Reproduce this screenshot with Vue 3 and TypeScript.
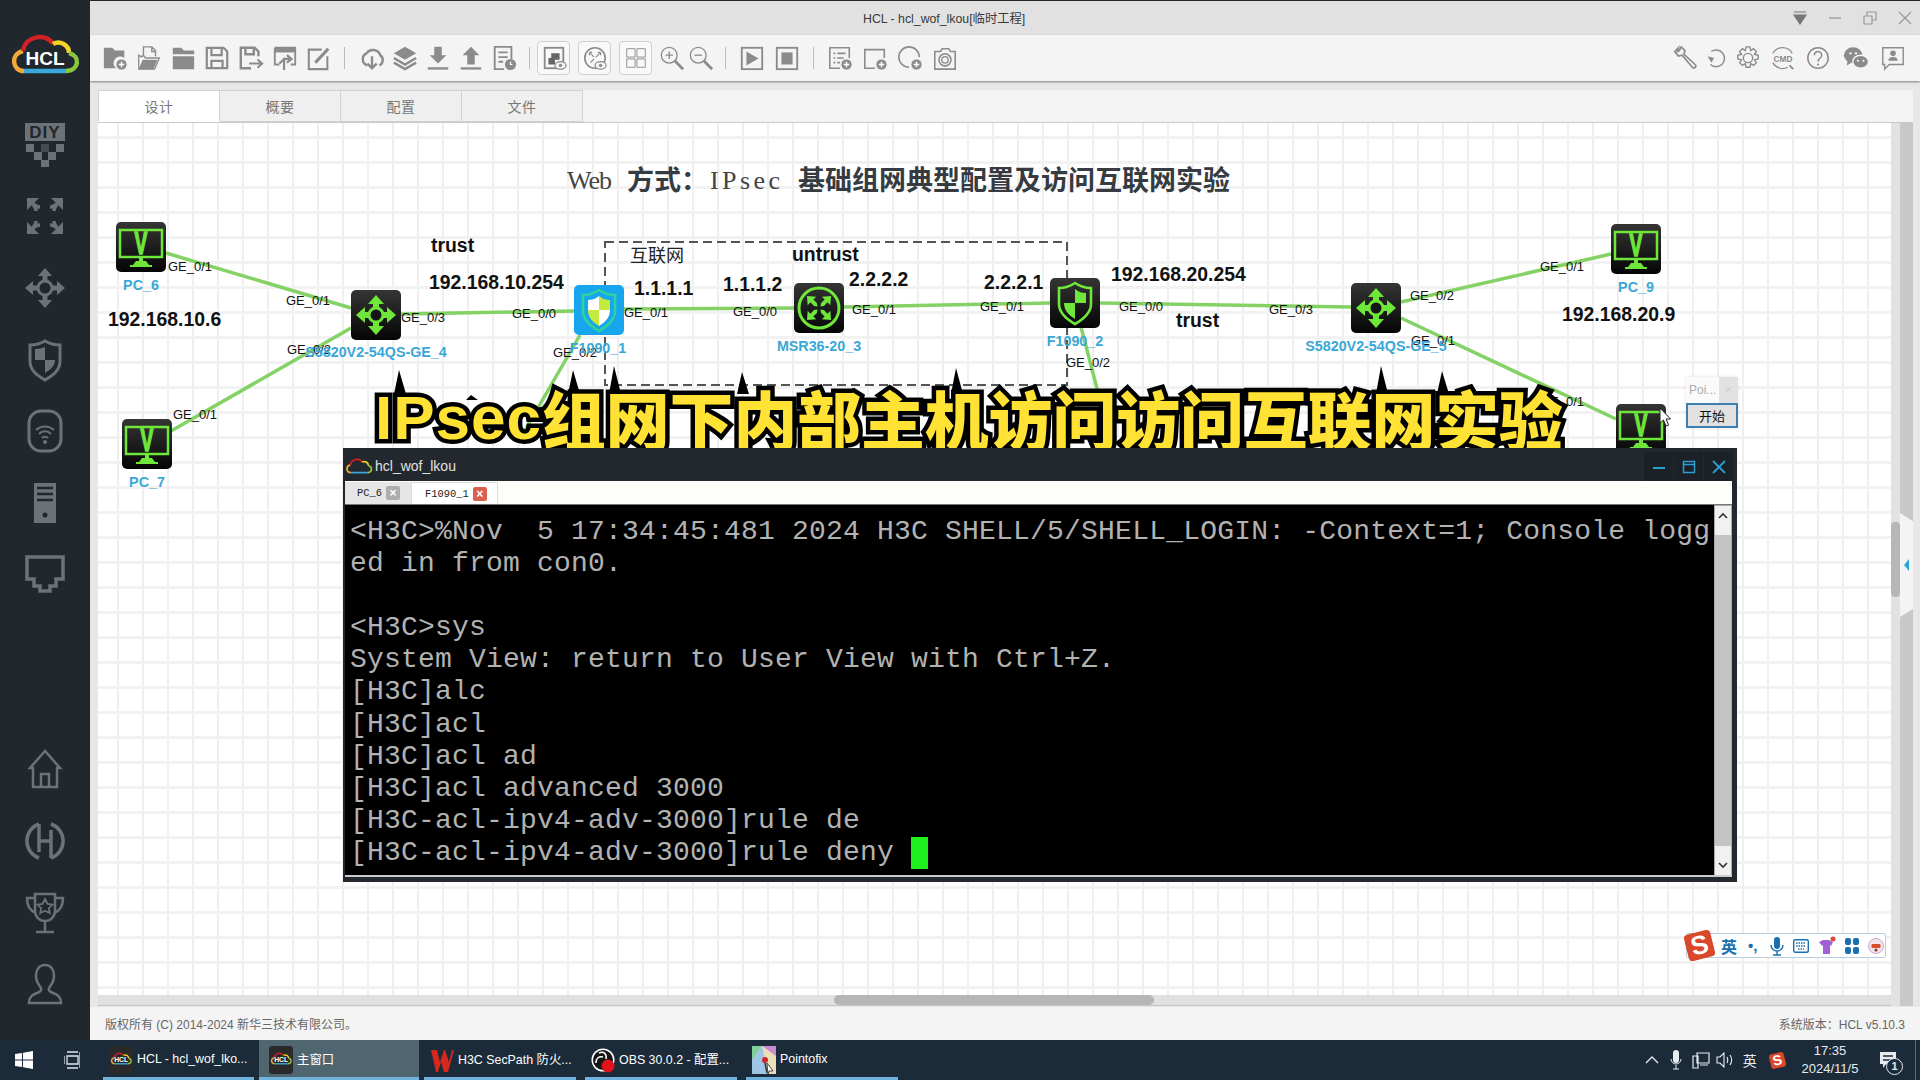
<script setup lang="ts">
const OX = 98
const OY = 123
const G = '#8b8b8b'
const F = `fill="${G}"`
const S = `fill="none" stroke="${G}"`
const plus = (x: number, y: number, r = 6) =>
  `<circle cx="${x}" cy="${y}" r="${r}" ${F} stroke="#f4f4f4" stroke-width="1"/><path d="M${x} ${y - 3}v6M${x - 3} ${y}h6" stroke="#fff" stroke-width="1.6"/>`
const eye = (x: number, y: number) =>
  `<ellipse cx="${x}" cy="${y}" rx="6" ry="4" fill="#f4f4f4" stroke="${G}" stroke-width="1.3"/><circle cx="${x}" cy="${y}" r="1.8" ${F}/>`

const toolIcons: Record<string, string> = {
  newfolder: `<path d="M2 3h9l3 3h10v8a7 7 0 0 0-9 11H2z" ${F}/>${plus(21, 21)}`,
  openfile: `<path d="M8 12V2h9l4 4v6M17 2v5h4" ${S} stroke-width="1.5"/><path d="M3 26V11l3 2v-1h3l1 2h15l-5 12z" fill="#fff" stroke="${G}" stroke-width="1.5"/><path d="M3 26 7 16h16l-4 10z" ${F}/>`,
  folder: `<path d="M3 3h9l3 3h11v4H3zM3 12h23v14H3z" ${F}/>`,
  save: `<path d="M3 3h18l4 4v18H3zM8 3v8h11V3M8 25v-8h12v8" ${S} stroke-width="2.4"/>`,
  saveas: `<path d="M14 25H3V3h15l4 4v5M8 3v7h9V3" ${S} stroke-width="2.6"/><path d="M12 20h13M21 15.5l5 4.5-5 4.5" ${S} stroke-width="2.2"/>`,
  import: `<path d="M3 3h22v18h-5M8 21H3V3" ${S} stroke-width="2"/><rect x="3" y="3" width="22" height="5" ${F}/><path d="M13 27V15h6M16 11l5 4-5 4M8 20l5-5" ${S} stroke-width="2.4"/>`,
  edit: `<path d="M17 5H3v21h20V12" ${S} stroke-width="2.2"/><path d="M10 19 24 4" ${S} stroke-width="3.4"/>`,
  cloud: `<path d="M9 22a7 7 0 0 1-1-13 8.5 8.5 0 0 1 15 2 6.5 6.5 0 0 1-1 11" ${S} stroke-width="2.6"/><path d="M14 12v13M9 20l5 5 5-5" ${S} stroke-width="2.6"/>`,
  layers: `<path d="M14 2 26 9 14 16 2 9z" ${F}/><path d="M2 14l12 7 12-7M2 19l12 7 12-7" ${S} stroke-width="2.6"/>`,
  download: `<path d="M10 2h8v9h5l-9 9-9-9h5z" ${F}/><rect x="3" y="24" width="22" height="2.5" ${F}/>`,
  upload: `<path d="M14 2l9 9h-5v10h-8V11H5z" ${F}/><rect x="3" y="24" width="22" height="2.5" ${F}/>`,
  report: `<path d="M14 26H4V2h18v13M8 8h10M8 13h10M8 18h5" ${S} stroke-width="2"/><circle cx="21" cy="21" r="6" ${F}/><path d="M21 18v3h2" stroke="#fff" stroke-width="1.3" fill="none"/>`,
  net: `<rect x="4" y="3" width="20" height="22" fill="none" stroke="${G}" stroke-width="2"/><path d="M11 9h9v7h-5v5H8v-7h3z" fill="#666"/>${eye(21, 22)}`,
  ring: `<circle cx="14" cy="14" r="11" fill="none" stroke="${G}" stroke-width="1.8"/><path d="M9 9l4 4M19 9l-4 4M9 19l4-4M8 8h3M8 8v3M20 8h-3M20 8v3" ${S} stroke-width="1.3"/>${eye(20, 22)}`,
  grid: `<path d="M4 4h9v9H4zM15 4h9v9h-9zM4 15h9v9H4zM15 15h9v9h-9z" ${S} stroke-width="1"/>`,
  zoomin: `<circle cx="11" cy="11" r="8.5" ${S} stroke-width="1.4"/><path d="M11 7v8M7 11h8" ${S} stroke-width="1.4"/><path d="M17 17l9 9" ${S} stroke-width="3"/>`,
  zoomout: `<circle cx="11" cy="11" r="8.5" ${S} stroke-width="1.4"/><path d="M7 11h8" ${S} stroke-width="1.4"/><path d="M17 17l9 9" ${S} stroke-width="3"/>`,
  play: `<rect x="3" y="3" width="22" height="23" ${S} stroke-width="2"/><path d="M8 7l13 7.5L8 22z" ${F}/>`,
  stop: `<rect x="3" y="3" width="22" height="23" ${S} stroke-width="2"/><rect x="8" y="8" width="12" height="13" ${F}/>`,
  listadd: `<path d="M14 25H3V3h21v11M7 9h2M11 9h9M7 14h2M11 14h7M7 19h2M11 19h3" ${S} stroke-width="1.7"/>${plus(21, 21)}`,
  rectadd: `<path d="M14 25H3V5h21v9" ${S} stroke-width="1.7"/>${plus(21, 21)}`,
  circleadd: `<path d="M13 24a11 11 0 1 1 11-11" ${S} stroke-width="1.7"/>${plus(21, 21)}`,
  camera: `<path d="M3 7h6l2-3h7l2 3h5v19H3z" ${S} stroke-width="1.7"/><circle cx="14" cy="16" r="6.5" ${S} stroke-width="1.7"/><circle cx="14" cy="16" r="3.5" ${S} stroke-width="1.5"/>`,
  wrench: `<path d="M8 3 4 7l4 5 4-1 11 13a2 2 0 0 0 3-3L14 10l1-4-4-4-2 4-2 1z" ${S} stroke-width="1.8"/>`,
  refresh: `<path d="M9 7a9 9 0 1 1-1 14" ${S} stroke-width="1.6"/><path d="M5 12l4 7 3-5z" ${F}/>`,
  gear: `<circle cx="14" cy="14" r="5" ${S} stroke-width="1.5"/><path d="M12 2h4l1 4 3-2 3 3-2 3 4 1v4l-4 1 2 3-3 3-3-2-1 4h-4l-1-4-3 2-3-3 2-3-4-1v-4l4-1-2-3 3-3 3 2z" ${S} stroke-width="1.5"/>`,
  cmd: `<path d="M3 9a12 12 0 0 1 21 0M3 19a12 12 0 0 0 16 5" ${S} stroke-width="1.3"/><text x="14" y="18" text-anchor="middle" font-family="Liberation Sans" font-weight="700" font-size="9" ${F}>CMD</text><path d="M21 22l4 4" ${S} stroke-width="2"/>`,
  help: `<circle cx="14" cy="14" r="11" ${S} stroke-width="1.6"/><path d="M10 11a4 4 0 1 1 6 3.5c-1.5 1-2 1.5-2 3.5" ${S} stroke-width="1.6"/><circle cx="14" cy="21" r="1.2" ${F}/>`,
  wechat: `<ellipse cx="11" cy="11" rx="10" ry="8.5" ${F}/><path d="M5 17l-1 5 5-3z" ${F}/><ellipse cx="19" cy="18" rx="8.5" ry="7" ${F} stroke="#f4f4f4" stroke-width="1.5"/><circle cx="8" cy="9" r="1.3" fill="#f4f4f4"/><circle cx="14" cy="9" r="1.3" fill="#f4f4f4"/><circle cx="16" cy="17" r="1.1" fill="#f4f4f4"/><circle cx="22" cy="17" r="1.1" fill="#f4f4f4"/>`,
  feedback: `<path d="M3 3h22v18H10l-5 5v-5H3z" ${S} stroke-width="1.5"/><circle cx="14" cy="9" r="3" ${F}/><path d="M9 17c0-3 2-4 5-4s5 1 5 4z" ${F}/>`
}

const toolGroups = [
  { cls: 'g1', items: ['newfolder', 'openfile', 'folder', 'save', 'saveas', 'import', 'edit'] },
  { cls: 'g2', items: ['cloud', 'layers', 'download', 'upload', 'report'] },
  { cls: 'g3', boxed: ['net', 'ring', 'grid'], items: ['zoomin', 'zoomout'] },
  { cls: 'g4', items: ['play', 'stop'] },
  { cls: 'g5', items: ['listadd', 'rectadd', 'circleadd', 'camera'] }
]
const rightTools = ['wrench', 'refresh', 'gear', 'cmd', 'help', 'wechat', 'feedback']

const N = '#6d7276'
const NS = `fill="none" stroke="${N}"`
const NF = `fill="${N}"`
const arrow = `<path d="M22 2l7 8h-4.5v6h-5v-6H15z" ${NF}/>`
const rotated = (svg: string, angles: number[]) =>
  angles.map((a) => `<g transform="rotate(${a} 22 22)">${svg}</g>`).join('')

const sideTop: string[] = [
  `<rect x="2" y="0" width="40" height="18" ${NF}/><text x="22" y="15" text-anchor="middle" font-family="Liberation Sans" font-weight="700" font-size="17" letter-spacing="1" fill="#20272d">DIY</text><path d="M3 21h8v8H3zM33 21h8v8h-8zM11 29h8v8h-8zM25 29h8v8h-8zM18 37h8v7h-8z" ${NF}/><path d="M18 21h8v8h-8z" ${NF} opacity=".5"/>`,
  `${rotated(`<path d="M8 8c5 5 7 5 9 5M8 8c5 5 5 7 5 9" fill="none" stroke="${N}" stroke-width="3.5"/><path d="M4 4h12L4 16z" ${NF}/>`, [0, 90, 180, 270])}`,
  `${rotated(arrow, [0, 90, 180, 270])}<circle cx="22" cy="22" r="7" fill="#20272d" stroke="${N}" stroke-width="3"/>`,
  `<path d="M22 3c5 3 10 4 15 4v16c0 10-8 15-15 19-7-4-15-9-15-19V7c5 0 10-1 15-4z" ${NS} stroke-width="3"/><path d="M22 9v13H12V11c4 0 7-1 10-2zM22 22h10c0 6-5 10-10 13z" ${NF}/>`,
  `<rect x="6" y="2" width="32" height="40" rx="12" ${NS} stroke-width="3"/><path d="M13 21a13 13 0 0 1 18 0M16 25a8 8 0 0 1 12 0M19 29a4 4 0 0 1 6 0" fill="none" stroke="${N}" stroke-width="2"/><circle cx="22" cy="33" r="2" ${NF}/>`,
  `<rect x="11" y="2" width="22" height="40" ${NF}/><path d="M14 7h16M14 13h16M14 19h16" stroke="#20272d" stroke-width="2.5"/><circle cx="22" cy="34" r="2.5" fill="#20272d"/>`,
  `<path d="M4 5h36v22h-7v7h-6v5H17v-5h-6v-7H4z" ${NS} stroke-width="3.5"/>`
]
const sideBottom: string[] = [
  `<path d="M22 4 7 21h3v19h24V21h3zM18 40V27h8v13" ${NS} stroke-width="2.5"/>`,
  `<path d="M16 5a18 18 0 0 0 0 34M28 5a18 18 0 0 1 0 34" ${NS} stroke-width="3.5"/><path d="M16 5v28M28 11v28M16 22h12" ${NS} stroke-width="3.5"/>`,
  `<path d="M12 3h20v17a10 10 0 0 1-20 0zM12 7H4c0 9 3 13 9 15M32 7h8c0 9-3 13-9 15M22 30v10M13 41h18" ${NS} stroke-width="2.5"/><path d="M22 8l2.5 5 5 .7-3.7 3.5 1 5-4.8-2.5-4.8 2.5 1-5-3.7-3.5 5-.7z" fill="none" stroke="${N}" stroke-width="1.8"/>`,
  `<path d="M22 3c-6 0-9 5-9 11s3 9 5 12c1 2-1 4-4 5-5 2-8 4-8 10h32c0-6-3-8-8-10-3-1-5-3-4-5 2-3 5-6 5-12S28 3 22 3z" ${NS} stroke-width="2.5"/>`
]

const logoParts = `<path d="M15 38C3 38 1 21 14 18" fill="none" stroke="#f2a83b" stroke-width="4.5"/><path d="M14 18C16 2 38 0 44 11" fill="none" stroke="#cf2127" stroke-width="4.5"/><path d="M44 11C51 7 60 12 60 20" fill="none" stroke="#f5d327" stroke-width="4.5"/><path d="M60 20C72 23 70 38 57 38" fill="none" stroke="#8cc63f" stroke-width="4.5"/><path d="M15 38H57" fill="none" stroke="#3ba9dc" stroke-width="4.5"/>`
const mainLogo = `${logoParts}<text x="36" y="32" text-anchor="middle" font-family="Liberation Sans" font-weight="700" font-size="19" fill="#fff">HCL</text>`
const taskLogo = `<rect width="24" height="28" rx="3" fill="#2a2a2a"/><g transform="translate(1 6) scale(.31)">${logoParts}<text x="36" y="32" text-anchor="middle" font-family="Liberation Sans" font-weight="700" font-size="22" fill="#fff">HCL</text></g>`

const GR = '#6fe63a'
const pcIcon = `<rect x="4" y="8" width="42" height="27" fill="none" stroke="${GR}" stroke-width="2.5"/><text transform="translate(25 32) scale(.62 1)" text-anchor="middle" font-family="Liberation Sans" font-weight="700" font-size="31" fill="${GR}" stroke="${GR}" stroke-width="1.5">V</text><rect x="23" y="35" width="4" height="4" fill="${GR}"/><path d="M20 39h10l3 4H17z" fill="${GR}"/><rect x="14" y="43" width="22" height="2" fill="${GR}"/>`
const swArrow = `<path d="M25 5l8 9h-5v6h-6v-6h-5z" fill="${GR}"/>`
const spin = (s: string, a: number[]) => a.map((d) => `<g transform="rotate(${d} 25 25)">${s}</g>`).join('')
const switchIcon = `${spin(swArrow, [0, 90, 180, 270])}<circle cx="25" cy="25" r="7" fill="#151515" stroke="${GR}" stroke-width="3"/>`
const routerIcon = `<circle cx="25" cy="25" r="20" fill="none" stroke="${GR}" stroke-width="3"/>${spin(`<path d="M25 8l6 7h-4v5l-2 3-2-3v-5h-4z" fill="${GR}"/>`, [45, 135, 225, 315])}`
const shield = (stroke: string, fill: string) =>
  `<path d="M25 5C31 9 37 10 41 10V26C41 36 32 42 25 46 18 42 9 36 9 26V10C13 10 19 9 25 5Z" fill="none" stroke="${stroke}" stroke-width="2.6"/><path d="M25 11C29 14 32 15 36 15V25H25ZM14 25H25V41C19 37 14 33 14 25Z" fill="${fill}"/>`
const fwIcon = shield(GR, GR)
const fwBlue = `<path d="M25 11V25H14V15C18 15 21 14 25 11ZM25 25H36C36 33 31 37 25 41Z" fill="#fff"/>${shield('#2fd29c', '#c3ea3d')}`

const icons: Record<string, string> = { pc: pcIcon, sw: switchIcon, rt: routerIcon, fw: fwIcon, fb: fwBlue }

const nodes = [
  { t: 'pc', x: 116, y: 222 },
  { t: 'pc', x: 122, y: 419 },
  { t: 'sw', x: 351, y: 290 },
  { t: 'fb', x: 574, y: 285 },
  { t: 'rt', x: 794, y: 283 },
  { t: 'fw', x: 1050, y: 278 },
  { t: 'sw', x: 1351, y: 283 },
  { t: 'pc', x: 1611, y: 224 },
  { t: 'pc', x: 1616, y: 404 }
].map((n) => ({ ...n, left: n.x - OX, top: n.y - OY }))

const links = [
  [166, 253, 351, 308],
  [171, 431, 351, 328],
  [401, 314, 574, 311],
  [624, 309, 794, 308],
  [844, 307, 1050, 303],
  [1100, 303, 1351, 307],
  [1401, 302, 1611, 254],
  [1401, 318, 1616, 419],
  [580, 335, 524, 432],
  [1081, 327, 1100, 400]
].map(([a, b, c, d]) => ({ x1: a - OX, y1: b - OY, x2: c - OX, y2: d - OY }))

const ports = [
  ['GE_0/1', 168, 266], ['GE_0/1', 286, 300], ['GE_0/2', 287, 349], ['GE_0/3', 401, 317],
  ['GE_0/0', 512, 313], ['GE_0/1', 624, 312], ['GE_0/2', 553, 352], ['GE_0/0', 733, 311],
  ['GE_0/1', 852, 309], ['GE_0/1', 980, 306], ['GE_0/0', 1119, 306], ['GE_0/2', 1066, 362],
  ['GE_0/3', 1269, 309], ['GE_0/2', 1410, 295], ['GE_0/1', 1411, 340], ['GE_0/1', 1540, 266],
  ['GE_0/1', 173, 414], ['GE_0/1', 1540, 401]
].map(([text, x, y]) => ({ text: text as string, left: (x as number) - OX, top: (y as number) - OY }))

const ips = [
  ['trust', 431, 245], ['192.168.10.254', 429, 282], ['192.168.10.6', 108, 319], ['1.1.1.1', 634, 288],
  ['1.1.1.2', 723, 284], ['untrust', 792, 254], ['2.2.2.2', 849, 279], ['2.2.2.1', 984, 282],
  ['192.168.20.254', 1111, 274], ['trust', 1176, 320], ['192.168.20.9', 1562, 314]
].map(([text, x, y]) => ({ text: text as string, left: (x as number) - OX, top: (y as number) - OY }))

const names = [
  ['PC_6', 141, 285], ['PC_7', 147, 482], ['S5820V2-54QS-GE_4', 376, 352], ['F1090_1', 598, 348],
  ['MSR36-20_3', 819, 346], ['F1090_2', 1075, 341], ['S5820V2-54QS-GE_5', 1376, 346], ['PC_9', 1636, 287]
].map(([text, x, y]) => ({ text: text as string, left: (x as number) - OX, top: (y as number) - OY }))

const spikes = [
  [399, 370, 394], [471, 395, 400], [573, 370, 394], [614, 366, 394], [742, 372, 394], [956, 368, 394], [1381, 366, 394], [1442, 371, 394]
].map(([x, y, b]) => `${x - 5 - OX},${b - OY} ${x - OX},${y - OY} ${x + 7 - OX},${b - OY}`)

const termLines = [
  '<H3C>%Nov  5 17:34:45:481 2024 H3C SHELL/5/SHELL_LOGIN: -Context=1; Console logg',
  'ed in from con0.',
  ' ',
  '<H3C>sys',
  'System View: return to User View with Ctrl+Z.',
  '[H3C]alc',
  '[H3C]acl',
  '[H3C]acl ad',
  '[H3C]acl advanced 3000',
  '[H3C-acl-ipv4-adv-3000]rule de'
]

const taskItems = [
  { cls: 'ti1', text: 'HCL - hcl_wof_lko...', icon: taskLogo },
  { cls: 'ti2', text: '主窗口', icon: taskLogo },
  { cls: 'ti3', text: 'H3C SecPath 防火...', icon: `<path d="M1 4h6l3 12 4-12h1l4 12 3-12h2l-6 22h-4l-3-10-3 10H6z" fill="#d5281f"/>` },
  { cls: 'ti4', text: 'OBS 30.0.2 - 配置...', icon: `<circle cx="12" cy="14" r="11.5" fill="#fff"/><circle cx="12" cy="14" r="10" fill="#151515"/><path d="M8 7c5-2 8 1 7 6M5 17c0-5 3-7 7-6" fill="none" stroke="#fff" stroke-width="1.5"/><circle cx="17" cy="20" r="6.5" fill="#e0121c"/>` },
  { cls: 'ti5', text: 'Pointofix', icon: `<rect width="24" height="28" fill="#e9dfb8"/><path d="M0 0h10L0 14z" fill="#7fcf9b"/><path d="M10 0h14v10z" fill="#c98bd0"/><path d="M0 14 10 0l6 28H0z" fill="#9fc6e6"/><circle cx="13" cy="14" r="3" fill="#c9272b"/><path d="M13 17l2 10" stroke="#333" stroke-width="1.5"/><path d="M15 17l6 8-4 0-1 4z" fill="#fff" stroke="#222" stroke-width=".8"/>` }
]
</script>

<template>
  <div class="app">
    <div class="main">
      <aside class="sidebar">
        <svg class="logo" viewBox="0 0 72 42" width="72" height="42" v-html="mainLogo"></svg>
        <div class="side-list">
          <span v-for="(s, i) in sideTop" :key="i" class="side-slot">
            <svg viewBox="0 0 44 44" width="44" height="44" v-html="s"></svg>
          </span>
        </div>
        <div class="side-list side-bottom">
          <span v-for="(s, i) in sideBottom" :key="i" class="side-slot">
            <svg viewBox="0 0 44 44" width="44" height="44" v-html="s"></svg>
          </span>
        </div>
      </aside>

      <div class="content">
        <header class="titlebar">
          <span class="title-text">HCL - hcl_wof_lkou[临时工程]</span>
          <div class="win-ctl">
            <svg width="14" height="14" viewBox="0 0 14 14"><path d="M1 1h12M1 4h12L7 13z" stroke="#777" stroke-width="1.2" fill="#777"/></svg>
            <svg width="14" height="14" viewBox="0 0 14 14"><path d="M1 7h12" stroke="#999" stroke-width="1.3"/></svg>
            <svg width="14" height="14" viewBox="0 0 14 14"><path d="M1 5h8v8H1zM4 5V1h9v8H9" fill="none" stroke="#999" stroke-width="1.2"/></svg>
            <svg width="14" height="14" viewBox="0 0 14 14"><path d="M1 1l12 12M13 1 1 13" stroke="#999" stroke-width="1.2"/></svg>
          </div>
        </header>

        <nav class="toolbar">
          <template v-for="(g, gi) in toolGroups" :key="g.cls">
            <i v-if="gi > 0" class="sep" :class="'sep' + gi"></i>
            <div class="tb-group" :class="g.cls">
              <span v-for="b in g.boxed || []" :key="b" class="tb-box">
                <svg viewBox="0 0 28 28" width="26" height="26" v-html="toolIcons[b]"></svg>
              </span>
              <span v-for="it in g.items" :key="it" class="tb-slot">
                <svg viewBox="0 0 28 28" width="26" height="26" v-html="toolIcons[it]"></svg>
              </span>
            </div>
          </template>
          <div class="tb-group g-right">
            <span v-for="it in rightTools" :key="it" class="tb-slot">
              <svg viewBox="0 0 28 28" width="26" height="26" v-html="toolIcons[it]"></svg>
            </span>
          </div>
        </nav>

        <div class="work">
          <section class="panel">
            <div class="tabs">
              <span class="tab active">设计</span>
              <span class="tab">概要</span>
              <span class="tab">配置</span>
              <span class="tab">文件</span>
            </div>
            <div class="panel-body">
              <div class="canvas-col">
                <div class="canvas">
                  <svg class="wires" width="1793" height="873">
                    <rect x="507" y="119" width="462" height="143" fill="none" stroke="#555" stroke-width="2" stroke-dasharray="9 5"/>
                    <line v-for="(l, i) in links" :key="i" :x1="l.x1" :y1="l.y1" :x2="l.x2" :y2="l.y2" stroke="#84d265" stroke-width="3.5"/>
                  </svg>

                  <div class="diagram-title">
                    <span class="t-web">Web</span>
                    <span class="t-cjk t-way">方式：</span>
                    <span class="t-ipsec">IPsec</span>
                    <span class="t-cjk">基础组网典型配置及访问互联网实验</span>
                  </div>
                  <span class="net-label">互联网</span>

                  <div v-for="(n, i) in nodes" :key="i" class="node" :class="{ blue: n.t === 'fb' }" :style="{ left: n.left + 'px', top: n.top + 'px' }">
                    <svg viewBox="0 0 50 50" width="50" height="50" v-html="icons[n.t]"></svg>
                  </div>
                  <span v-for="(p, i) in ports" :key="'p' + i" class="port" :style="{ left: p.left + 'px', top: p.top + 'px' }">{{ p.text }}</span>
                  <span v-for="(p, i) in ips" :key="'i' + i" class="ip" :style="{ left: p.left + 'px', top: p.top + 'px' }">{{ p.text }}</span>
                  <span v-for="(p, i) in names" :key="'n' + i" class="name" :style="{ left: p.left + 'px', top: p.top + 'px' }">{{ p.text }}</span>

                  <svg class="spikes" width="1793" height="873">
                    <polygon v-for="(s, i) in spikes" :key="i" :points="s" fill="#000"/>
                  </svg>
                  <div class="caption">
                    <span class="cap-latin">IPsec</span><span>组网下内部主机访问访问互联网实验</span>
                  </div>

                  <div class="mini">
                    <div class="mini-head"><span class="mini-title">Poi...</span><span class="mini-x">×</span></div>
                    <button class="mini-btn">开始</button>
                  </div>
                  <svg class="pointer" width="12" height="20" viewBox="0 0 12 20"><path d="M1 1v15l3.5-3 2.5 6 2.5-1-2.5-6h4.5z" fill="#fff" stroke="#222"/></svg>

                  <div class="terminal">
                    <div class="term-head">
                      <svg width="28" height="20" viewBox="0 0 72 42" v-html="logoParts"></svg>
                      <span class="term-title">hcl_wof_lkou</span>
                      <div class="term-ctl">
                        <span><svg width="14" height="14" viewBox="0 0 14 14"><path d="M1 8h12" stroke="#2b9fd0" stroke-width="2"/></svg></span>
                        <span><svg width="14" height="14" viewBox="0 0 14 14"><path d="M1.5 1.5h11v11h-11zM1.5 4.5h11" fill="none" stroke="#2b9fd0" stroke-width="1.5"/></svg></span>
                        <span><svg width="14" height="14" viewBox="0 0 14 14"><path d="M1 1l12 12M13 1 1 13" stroke="#2b9fd0" stroke-width="1.8"/></svg></span>
                      </div>
                    </div>
                    <div class="term-tabs">
                      <span class="ttab">PC_6<b class="tx gray">×</b></span>
                      <span class="ttab on">F1090_1<b class="tx red">×</b></span>
                    </div>
                    <div class="term-body">
                      <div class="term-text">
                        <div v-for="(l, i) in termLines" :key="i" class="tline">{{ l }}</div>
                        <div class="tline">[H3C-acl-ipv4-adv-3000]rule deny <i class="cursor"></i></div>
                      </div>
                      <div class="term-scroll">
                        <svg width="12" height="8" viewBox="0 0 12 8"><path d="M2 6l4-4 4 4" fill="none" stroke="#333" stroke-width="1.6"/></svg>
                        <div class="term-thumb"></div>
                        <svg width="12" height="8" viewBox="0 0 12 8"><path d="M2 2l4 4 4-4" fill="none" stroke="#333" stroke-width="1.6"/></svg>
                      </div>
                    </div>
                  </div>

                  <div class="ime">
                    <span class="ime-s">S</span>
                    <span class="ime-t">英</span>
                    <span class="ime-p">•,</span>
                    <svg class="ime-mic" width="14" height="20" viewBox="0 0 14 20"><rect x="4" y="1" width="6" height="12" rx="3" fill="#1a6fb0"/><path d="M1 9a6 6 0 0 0 12 0M7 15v4M3 19h8" fill="none" stroke="#1a6fb0" stroke-width="1.4"/></svg>
                    <svg width="16" height="14" viewBox="0 0 16 14"><rect x=".7" y=".7" width="14.6" height="12.6" rx="1.5" fill="none" stroke="#1a6fb0" stroke-width="1.4"/><path d="M3 4h10M3 7h10M5 10h6" stroke="#1a6fb0" stroke-width="1.5" stroke-dasharray="1.5 1"/></svg>
                    <svg width="18" height="20" viewBox="0 0 18 20"><path d="M1 6l4-2h6l4 2-2 4-1-1v9H5V9l-1 1z" fill="#a061d8"/><circle cx="15" cy="3" r="2.5" fill="#e0483a"/></svg>
                    <svg width="14" height="16" viewBox="0 0 14 16"><g fill="#1a6fb0"><rect width="6" height="7" rx="2"/><rect x="8" width="6" height="7" rx="2"/><rect y="9" width="6" height="7" rx="2"/><rect x="8" y="9" width="6" height="7" rx="2"/></g></svg>
                    <svg width="16" height="18" viewBox="0 0 16 18"><circle cx="8" cy="9" r="7.5" fill="#f1e4ea" stroke="#c9a8d8"/><rect x="3.5" y="7" width="9" height="4" rx="1" fill="#d4502c"/><circle cx="8" cy="13" r="1.5" fill="#8a3a20"/></svg>
                  </div>
                </div>
                <div class="hscroll"><div class="hthumb"></div></div>
              </div>
              <div class="vscroll"><div class="vthumb"></div></div>
              <div class="side-strip">
                <div class="collapse"><i class="tri"></i></div>
              </div>
            </div>
          </section>
        </div>

        <footer class="status">
          <span>版权所有 (C) 2014-2024 新华三技术有限公司。</span>
          <span>系统版本：HCL v5.10.3</span>
        </footer>
      </div>
    </div>

    <div class="taskbar">
      <span class="start">
        <svg width="18" height="18" viewBox="0 0 18 18"><path d="M0 3l7-1v6.500H0zM8 1.800 18 0v8.500H8zM0 9.500h7V16l-7-1zM8 9.500h10V18L8 16.200z" fill="#fff"/></svg>
      </span>
      <span class="start">
        <svg width="16" height="18" viewBox="0 0 16 18"><path d="M3 1h11M3 17h11M3 5h11v8H3zM0 5v8M16 1v16" fill="none" stroke="#dfe6ec" stroke-width="1.3"/></svg>
      </span>
      <div v-for="t in taskItems" :key="t.cls" class="titem" :class="t.cls">
        <svg width="24" height="28" viewBox="0 0 24 28" v-html="t.icon"></svg>
        <span>{{ t.text }}</span>
      </div>
      <div class="tray">
        <span class="tslot"><svg width="14" height="8" viewBox="0 0 14 8"><path d="M1 7l6-6 6 6" fill="none" stroke="#e6ebef" stroke-width="1.3"/></svg></span>
        <span class="tslot"><svg width="12" height="20" viewBox="0 0 12 20"><rect x="3" y="0" width="6" height="13" rx="3" fill="#e6ebef"/><path d="M1 9a5 5 0 0 0 10 0M6 15v4M3 19h6" fill="none" stroke="#e6ebef"/></svg></span>
        <span class="tslot"><svg width="18" height="18" viewBox="0 0 18 18"><path d="M5 2h12v10H5zM1 5h5v12H1zM8 14h8" fill="none" stroke="#e6ebef" stroke-width="1.2"/></svg></span>
        <span class="tslot"><svg width="18" height="16" viewBox="0 0 18 16"><path d="M1 5h3l4-4v14l-4-4H1zM11 5c1 2 1 4 0 6M14 3c2 3 2 7 0 10" fill="none" stroke="#e6ebef" stroke-width="1.1"/></svg></span>
        <span class="tslot ttext">英</span>
        <span class="tslot tslot-s"><span class="tray-s">S</span></span>
        <div class="clock"><span>17:35</span><span>2024/11/5</span></div>
        <span class="notif">
          <svg width="18" height="18" viewBox="0 0 18 18"><path d="M1 1h16v12H7l-3 4v-4H1z" fill="#e6ebef"/><path d="M4 5h10M4 9h10" stroke="#1c2b3a" stroke-width="1.3"/></svg>
          <b class="notif-n">1</b>
        </span>
        <i class="show-desk"></i>
      </div>
    </div>
  </div>
</template>

<style>
html, body { margin: 0; background: #fff; }
</style>

<style scoped>
.app {
  width: 1920px;
  height: 1080px;
  display: flex;
  flex-direction: column;
  overflow: hidden;
  font-family: "Liberation Sans", "Noto Sans CJK SC", sans-serif;
  border-top: 1px solid #20272d;
  box-sizing: border-box;
}
.main { flex: 1; display: flex; min-height: 0; }
.sidebar { width: 90px; background: #20272d; display: flex; flex-direction: column; align-items: center; flex: none; }
.logo { margin-top: 32px; }
.side-list { display: flex; flex-direction: column; margin-top: 34px; }
.side-bottom { margin-top: auto; margin-bottom: 20px; }
.side-slot { height: 71.6px; display: flex; align-items: center; justify-content: center; }

.content { flex: 1; display: flex; flex-direction: column; min-width: 0; }
.titlebar { height: 34px; background: #e1e1e1; display: flex; align-items: center; padding-left: 773px; flex: none; }
.title-text { font-size: 12.3px; color: #3a3a3a; }
.win-ctl { margin-left: auto; display: flex; gap: 21px; padding-right: 8px; }

.toolbar { height: 46px; flex: none; background: #f4f4f4; display: flex; align-items: center; padding-left: 8px; box-shadow: 0 1px 2px rgba(0,0,0,.45); position: relative; z-index: 2; }
.tb-group { display: flex; align-items: center; }
.tb-slot { height: 34px; display: flex; align-items: center; justify-content: center; }
.g1 .tb-slot { width: 34px; }
.g2 .tb-slot { width: 33px; }
.g3 .tb-slot { width: 29px; }
.g4 .tb-slot { width: 35px; }
.g5 .tb-slot { width: 35px; }
.g-right { margin-left: auto; padding-right: 11px; }
.g-right .tb-slot { width: 32px; }
.g-right .tb-slot:nth-child(4), .g-right .tb-slot:nth-child(5) { margin-left: 3px; }
.g-right .tb-slot:nth-child(6) { margin-left: 6px; }
.g-right .tb-slot:nth-child(7) { margin-left: 5px; }
.g3 { gap: 8px; }
.g3 .tb-slot + .tb-slot { margin-left: -8px; }
.g3 .tb-box + .tb-slot { margin-left: -3px; }
.tb-box { width: 31px; height: 32px; border: 1px solid #cfcfcf; border-radius: 4px; background: #f9f9f9; display: flex; align-items: center; justify-content: center; }
.sep { width: 1px; height: 22px; background: #bdbdbd; flex: none; }
.sep1 { margin: 0 10px 0 8px; }
.sep2 { margin: 0 7px 0 9px; }
.sep3 { margin: 0 8px 0 10px; }
.sep4 { margin: 0 8px 0 9px; }

.work { flex: 1; min-height: 0; background: #e7e7e7; padding: 9px 7px 1px 8px; display: flex; }
.panel { flex: 1; display: flex; flex-direction: column; min-width: 0; }
.tabs { height: 32px; flex: none; display: flex; background: #f3f3f3; border-bottom: 1px solid #c9c9c9; }
.tab { width: 120px; border: 1px solid #d2d2d2; border-left: 0; background: #efefef; display: flex; align-items: center; justify-content: center; font-size: 14px; color: #777; letter-spacing: .5px; }
.tab.active { background: #fff; border-left: 1px solid #d2d2d2; border-bottom-color: #fff; }
.panel-body { flex: 1; display: flex; min-height: 0; }
.canvas-col { width: 1793px; flex: none; display: flex; flex-direction: column; }
.canvas {
  flex: 1;
  position: relative;
  overflow: hidden;
  background-color: #fff;
  background-image:
    linear-gradient(#f2f2f2 3px, transparent 3px),
    linear-gradient(90deg, #efefef 2px, transparent 2px);
  background-size: 25px 25px;
  background-position: 0 13px, 19px 0;
}
.hscroll { height: 10px; flex: none; background: #e0e0e0; border-bottom: 1px solid #c6c6c6; display: flex; }
.hthumb { width: 320px; margin-left: 736px; background: #b6b6b6; border-radius: 5px; }
.vscroll { width: 9px; flex: none; background: #e2e2e2; position: relative; }
.vthumb { position: absolute; top: 399px; left: 0; width: 9px; height: 75px; background: #b6b6b6; border-radius: 4px; }
.side-strip { flex: 1; background: #c8c8c8; position: relative; }
.collapse { position: absolute; top: 390px; left: 0; width: 13px; height: 104px; background: #f4f4f4; clip-path: polygon(0 0, 100% 8%, 100% 92%, 0 100%); display: flex; align-items: center; justify-content: center; }
.tri { width: 0; height: 0; border-style: solid; border-width: 6px 5px 6px 0; border-color: transparent #2ba6d8 transparent transparent; }

.wires, .spikes { position: absolute; left: 0; top: 0; }
.diagram-title { position: absolute; left: 469px; top: 40px; display: flex; align-items: center; height: 36px; color: #353b41; white-space: nowrap; }
.t-web { font-family: "Liberation Serif", serif; font-size: 26px; letter-spacing: -1px; width: 60px; color: #444; }
.t-cjk { font-size: 27px; line-height: 36px; font-weight: 700; }
.t-way { width: 83px; }
.t-ipsec { font-family: "Liberation Serif", serif; font-size: 26px; letter-spacing: 3.4px; width: 88px; color: #444; box-sizing: border-box; }
.net-label { position: absolute; left: 532px; top: 122px; font-size: 18px; line-height: 22px; color: #222; }

.node { position: absolute; width: 50px; height: 50px; border-radius: 5px; background: linear-gradient(#353535, #050505); }
.node svg { display: block; }
.node.blue { background: #17a6ee; }
.port, .ip, .name { position: absolute; white-space: nowrap; transform: translateY(-50%); }
.port { font-size: 13px; color: #111; }
.ip { font-size: 19.4px; font-weight: 700; color: #111; }
.name { font-size: 14.3px; font-weight: 700; color: #3aa7d6; transform: translate(-50%, -50%); }

.caption {
  position: absolute;
  left: 277px;
  top: 262px;
  height: 65px;
  display: flex;
  align-items: center;
  white-space: nowrap;
  font-family: "Noto Sans CJK SC", sans-serif;
  font-weight: 900;
  font-size: 63.8px;
  line-height: 65px;
  color: #ffe234;
  -webkit-text-stroke: 9px #000;
  paint-order: stroke fill;
  text-shadow: 2px 3px 0 #000;
}
.cap-latin { letter-spacing: 1px; font-family: "Liberation Sans", sans-serif; font-weight: 700; font-size: 62px; }

.mini { position: absolute; left: 1588px; top: 254px; width: 52px; background: #fafafa; box-shadow: 0 0 3px rgba(0,0,0,.12); display: flex; flex-direction: column; }
.mini-head { height: 26px; display: flex; align-items: stretch; }
.mini-title { flex: 1; font-size: 12px; line-height: 26px; color: #aaa; padding-left: 3px; }
.mini-x { width: 19px; background: #e2e2e2; color: #cfcfcf; text-align: center; font-size: 13px; line-height: 26px; }
.mini-btn { height: 25px; box-sizing: border-box; border: 2px solid #3f7fb0; background: #e1e1e1; font-size: 13px; color: #111; font-family: "Noto Sans CJK SC", sans-serif; padding: 0; line-height: 20px; }
.pointer { position: absolute; left: 1561px; top: 284px; }

.terminal { position: absolute; left: 245px; top: 325px; width: 1394px; height: 434px; box-sizing: border-box; background: #22282d; padding: 0 5px 5px 2px; display: flex; flex-direction: column; }
.term-head { height: 33px; flex: none; display: flex; align-items: center; color: #e2e2e2; font-size: 14px; padding-top: 2px; box-sizing: border-box; }
.term-head svg { display: block; }
.term-title { margin-left: 2px; }
.term-ctl { margin-left: auto; display: flex; align-self: flex-end; height: 29px; gap: 1px; margin-right: -1px; }
.term-ctl span { width: 29px; background: #1b2126; display: flex; align-items: center; justify-content: center; }
.term-tabs { height: 24px; flex: none; background: #fdfdf9; display: flex; align-items: flex-end; border-bottom: 1px solid #777; box-sizing: border-box; }
.ttab { height: 22px; display: flex; align-items: center; font-size: 10.4px; font-family: "Liberation Mono", monospace; color: #222; background: #e6e6e6; width: 66px; box-sizing: border-box; padding-left: 12px; gap: 4px; }
.ttab.on { background: #fff; width: 87px; border: 1px solid #ddd; border-bottom: 0; padding-left: 13px; }
.tx { width: 14px; height: 14px; border-radius: 2px; color: #fff; font-size: 12px; line-height: 14px; text-align: center; font-family: "Liberation Sans", sans-serif; }
.tx.gray { background: #adadad; }
.tx.red { background: #d9604f; }
.term-body { flex: 1; min-height: 0; display: flex; background: #000; border-bottom: 2px solid #ccc; }
.term-text { flex: 1; padding: 11px 0 0 5px; font-family: "Liberation Mono", monospace; font-size: 28px; letter-spacing: .2px; line-height: 32.1px; color: #b2b2b2; white-space: pre; overflow: hidden; }
.tline { height: 32.1px; }
.cursor { display: inline-block; width: 17px; height: 32px; background: #1df01d; vertical-align: top; }
.term-scroll { width: 18px; flex: none; background: #f1f1f1; border: 1px solid #aaa; border-bottom: 0; box-sizing: border-box; display: flex; flex-direction: column; align-items: center; padding: 6px 0; gap: 15px; }
.term-thumb { flex: 1; width: 100%; background: #c4c4c4; }

.ime { position: absolute; left: 1588px; top: 810px; width: 200px; height: 25px; box-sizing: border-box; display: flex; align-items: center; background: #fff; border: 1px solid #b9cde0; border-radius: 2px; }
.ime > svg { flex: none; margin-left: 9px; }
.ime > .ime-mic { margin-left: 11px; }
.ime-s { width: 27px; height: 27px; margin-left: -1px; background: #d9482a; border-radius: 4px; color: #fff; font-weight: 700; font-size: 26px; line-height: 27px; text-align: center; transform: rotate(-14deg); flex: none; }
.ime-t { font-size: 16px; font-weight: 700; color: #1a6fb0; margin-left: 8px; font-family: "Noto Sans CJK SC", sans-serif; }
.ime-p { font-size: 15px; font-weight: 700; color: #1a6fb0; margin-left: 11px; width: 11px; }

.status { height: 33px; flex: none; background: #f4f4f4; display: flex; align-items: center; justify-content: space-between; padding: 0 15px 0 15px; font-size: 12px; color: #666; }

.taskbar { height: 40px; flex: none; background: #1c2b3a; display: flex; align-items: stretch; color: #fff; font-size: 12.4px; }
.start { width: 48px; display: flex; align-items: center; justify-content: center; flex: none; }
.titem { display: flex; align-items: center; gap: 4px; padding-left: 6px; box-sizing: border-box; border-bottom: 3px solid #6fb3dc; white-space: nowrap; width: 152px; flex: none; }
.titem svg { flex: none; margin-top: 2px; }
.ti1 { width: 151px; margin-left: 7px; background: #1c2b3a; }
.ti2 { width: 160px; margin-left: 5px; background: #4f6570; padding-left: 10px; }
.ti3 { margin-left: 5px; }
.ti4 { margin-left: 9px; }
.ti5 { margin-left: 9px; }
.tray { margin-left: auto; display: flex; align-items: center; position: relative; color: #e6ebef; }
.tslot { width: 24.5px; display: flex; align-items: center; justify-content: center; flex: none; }
.tslot-s { width: 25px; margin-left: 3px; }
.ttext { font-size: 14px; font-family: "Noto Sans CJK SC", sans-serif; }
.tray-s { width: 15px; height: 15px; background: #d9482a; border-radius: 3px; color: #fff; font-size: 14px; line-height: 15px; text-align: center; font-weight: 700; transform: rotate(-14deg); }
.clock { width: 80px; display: flex; flex-direction: column; align-items: center; font-size: 13px; line-height: 18px; }
.notif { width: 35px; height: 40px; position: relative; display: flex; align-items: center; justify-content: center; }
.notif-n { position: absolute; left: 16px; top: 18px; width: 15px; height: 15px; border-radius: 50%; background: #1c2b3a; border: 1px solid #e6ebef; font-size: 11px; line-height: 15px; text-align: center; }
.show-desk { width: 1px; height: 40px; background: #5a6a78; margin: 0 4px 0 10px; }
</style>
